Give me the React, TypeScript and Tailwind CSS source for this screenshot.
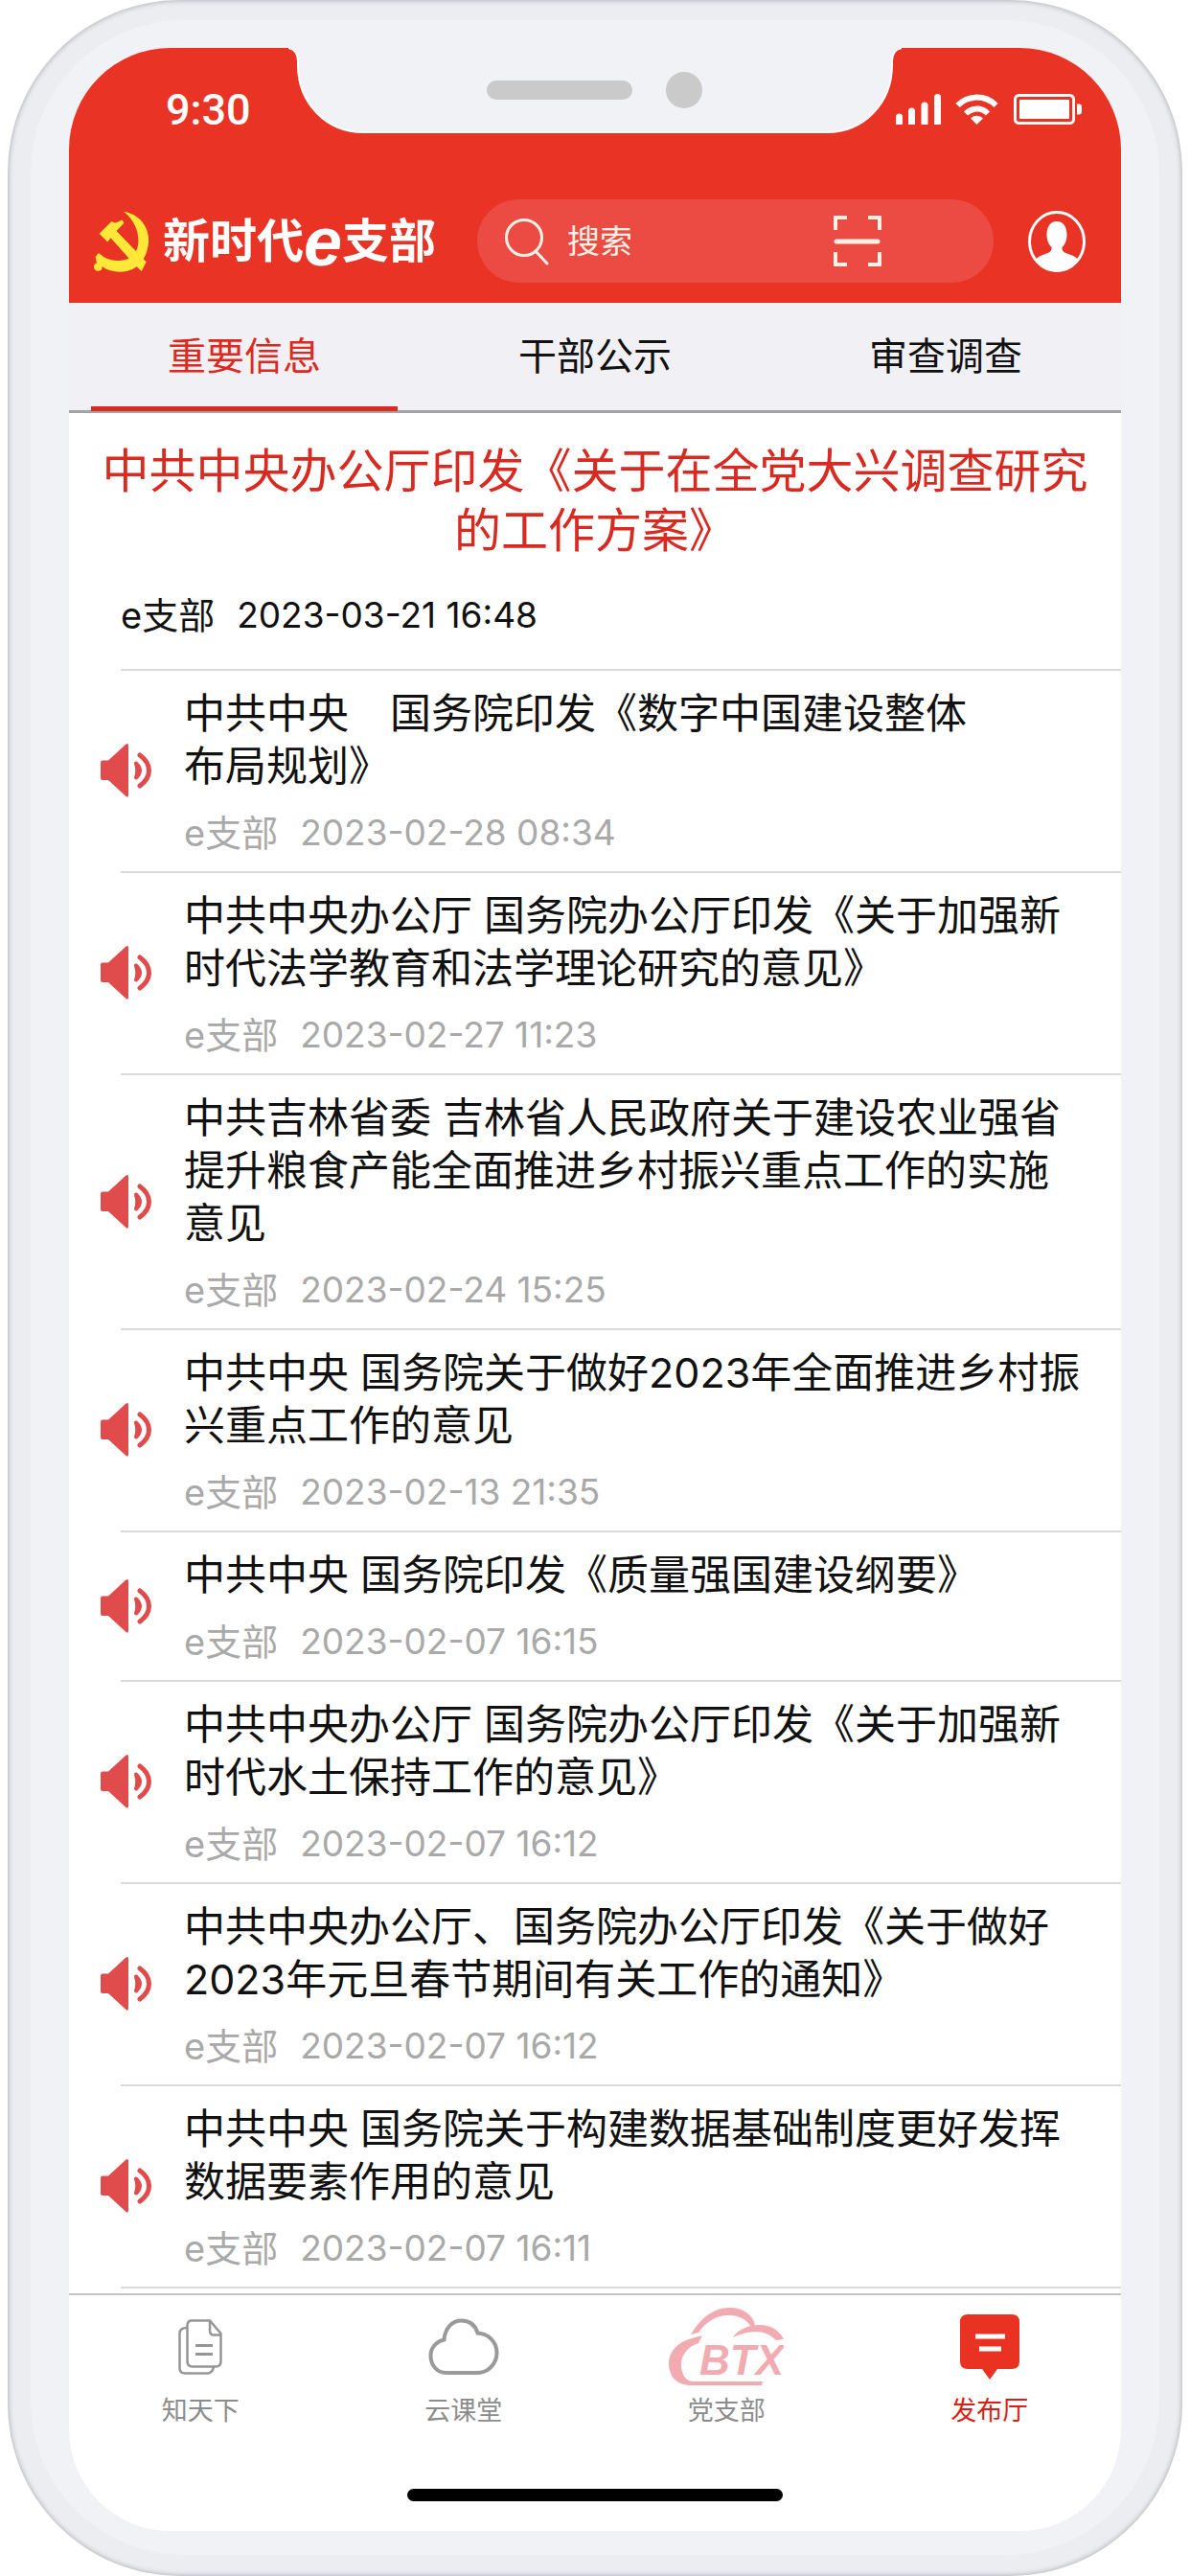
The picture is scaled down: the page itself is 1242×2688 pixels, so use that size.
import type { ReactNode } from 'react';

interface NewsItem {
  title: string;
  date: string;
}

const news: NewsItem[] = [
  { title: '中共中央　国务院印发《数字中国建设整体\n布局规划》', date: '2023-02-28 08:34' },
  { title: '中共中央办公厅 国务院办公厅印发《关于加强新\n时代法学教育和法学理论研究的意见》', date: '2023-02-27 11:23' },
  { title: '中共吉林省委 吉林省人民政府关于建设农业强省\n提升粮食产能全面推进乡村振兴重点工作的实施\n意见', date: '2023-02-24 15:25' },
  { title: '中共中央 国务院关于做好2023年全面推进乡村振\n兴重点工作的意见', date: '2023-02-13 21:35' },
  { title: '中共中央 国务院印发《质量强国建设纲要》', date: '2023-02-07 16:15' },
  { title: '中共中央办公厅 国务院办公厅印发《关于加强新\n时代水土保持工作的意见》', date: '2023-02-07 16:12' },
  { title: '中共中央办公厅、国务院办公厅印发《关于做好\n2023年元旦春节期间有关工作的通知》', date: '2023-02-07 16:12' },
  { title: '中共中央 国务院关于构建数据基础制度更好发挥\n数据要素作用的意见', date: '2023-02-07 16:11' },
];

const tabs = ['重要信息', '干部公示', '审查调查'];

function Notch() {
  return (
    <div className="absolute inset-x-0 top-0 flex justify-center">
      <svg width="640" height="90" viewBox="0 0 640 90">
        <path
          d="M0 0Q10 2 10 14V18C10 58 40 88 78 88H562C600 88 630 58 630 18V14Q630 2 640 0"
          fill="#f0f2f5"
          stroke="#fff"
          strokeWidth="2"
        />
        <rect x="207" y="34" width="152" height="20" rx="10" fill="#cacaca" />
        <circle cx="413" cy="44" r="19" fill="#cacaca" />
      </svg>
    </div>
  );
}

function StatusIcons() {
  return (
    <svg width="194" height="32" viewBox="0 0 194 32" fill="#fff">
      <path d="M0 32v-8a3.5 3.5 0 0 1 7 0v8z" />
      <path d="M13 32V18a3.5 3.5 0 0 1 7 0v14z" />
      <path d="M26.5 32V12a3.5 3.5 0 0 1 7 0v20z" />
      <path d="M40 32V3.5a3.5 3.5 0 0 1 7 0V32z" />
      <g fill="none" stroke="#fff" strokeWidth="6">
        <path d="M64.5 12A28 28 0 0 1 104.5 12" />
        <path d="M73 20.5A16 16 0 0 1 96 20.5" />
      </g>
      <path d="M84.5 32l-6.5-6.500a9 9 0 0 1 13 0z" />
      <rect x="124.5" y="1.5" width="61" height="29" rx="4" fill="none" stroke="#fff" strokeWidth="3" />
      <rect x="129" y="6" width="52" height="20" rx="1" />
      <path d="M189 10.5h2a3 3 0 0 1 3 3v5a3 3 0 0 1-3 3h-2z" />
    </svg>
  );
}

function PartyEmblem() {
  return (
    <svg width="58" height="64" viewBox="50 88 175 195" fill="#ffe838" preserveAspectRatio="none">
      <path d="M147 90C205 100 232 150 224 197C216 253 180 282 136 282C112 282 93 276 79 265A13 13 0 1 1 62 254L58 234L68 222L86 236C112 250 150 250 172 234C206 206 200 132 147 90Z" />
      <path d="M70 160L108 122L122 126L142 117L148 127L124 152L218 250L203 280L180 258L106 174L96 187Z" />
    </svg>
  );
}

function SearchIcon() {
  return (
    <svg width="46" height="50" viewBox="0 0 46 50" fill="none" stroke="#fff0e6" strokeWidth="3">
      <circle cx="20" cy="21" r="18.5" />
      <path d="M32 35L44 48" strokeLinecap="round" />
    </svg>
  );
}

function ScanIcon() {
  return (
    <svg width="50" height="54" viewBox="0 0 50 54" fill="none" stroke="#fff0e6" strokeWidth="4">
      <path d="M2 15V2H14M36 2H48V15M2 38V51H14M36 51H48V38" />
      <path d="M3 27H46" strokeWidth="5" strokeLinecap="round" />
    </svg>
  );
}

function AvatarIcon() {
  return (
    <svg width="60" height="64" viewBox="0 0 60 64">
      <ellipse cx="30" cy="32" rx="28.5" ry="30.5" fill="none" stroke="#fff" strokeWidth="3" />
      <path
        d="M30 11C23 11 19.5 17 19.5 25C19.5 31 21.5 35 24.5 38C25 42 22 44 18 45C13 46.5 10 48 8 51C13 59 21 63.5 30 63.5C39 63.5 47 59 52 51C50 48 47 46.5 42 45C38 44 35 42 35.5 38C38.5 35 40.5 31 40.5 25C40.5 17 37 11 30 11Z"
        fill="#fff"
      />
    </svg>
  );
}

function SpeakerIcon() {
  return (
    <svg width="54" height="58" viewBox="0 0 54 58" fill="none" stroke="#e04c4c" strokeLinecap="round">
      <path d="M2 18.5H8L26.5 1.5Q29 0 29 3V54Q29 58 26.5 56L8 39H2Q0 39 0 37V20.5Q0 18.5 2 18.5Z" fill="#e04c4c" stroke="none" />
      <path d="M37 21.5Q45 29 37 36.5Q39.500 29 37 21.5Z" fill="#e04c4c" strokeWidth="4" strokeLinejoin="round" />
      <path d="M41 13Q50.500 20 50.500 29Q50.500 38 41 45" strokeWidth="5" />
    </svg>
  );
}

function DocsIcon() {
  return (
    <svg width="46" height="58" viewBox="0 0 46 58" fill="none" stroke="#969696" strokeWidth="2.5">
      <path d="M13 1.5H33L44.5 15V44Q44.5 49.5 39 49.5H15Q9.5 49.5 9.5 44V6Q10 2 13 1.5Z" />
      <path d="M33 2V12Q33 16.5 37 16.5H44" />
      <path d="M9 9Q1.5 9 1.5 15V51Q1.5 56.5 7 56.5H31Q36 56 37 49.5" />
      <path d="M18 27.5H36M18 36.5H36" strokeWidth="3" />
    </svg>
  );
}

function CloudIcon() {
  return (
    <svg width="74" height="60" viewBox="0 0 74 60" fill="none" stroke="#9a9a9a" strokeWidth="4">
      <path d="M16.5 22.5C17.5 10 25 2.5 34.5 2.5C43 2.5 49 7 51.5 15.5C63 16 71.5 25 71.5 36C71.5 48 62 57 51 57H19C9 57 2.5 49 2.5 39C2.5 31 8 24.5 16.5 22.5Z" />
    </svg>
  );
}

function BtxIcon() {
  return (
    <svg width="120" height="82" viewBox="0 0 120 82" fill="#f2abb0">
      <path d="M23 28C35 8 49 0 64 0C78 0 88 8 90 18L86 20C81 12 73 8 62 8C49 8 39 15 31 26Z" />
      <path d="M67 31C73 22 84 18 94 18C106 18 115 23 120 33L112 34C106 28 99 25 91 25C83 25 75 27 67 31Z" />
      <path d="M24 32L35 29L31 37C19 41 13 50 13 59C13 70 18 77 26 77H98L97 81H21C7 80 0 71 0 58C0 46 9 36 24 32Z" />
      <text x="32" y="70" className="font-['Liberation_Sans',Arial,sans-serif] text-[44px] font-bold italic">
        BTX
      </text>
    </svg>
  );
}

function NoticeIcon() {
  return (
    <svg width="62" height="68" viewBox="0 0 62 68">
      <path d="M8 0H54Q62 0 62 8V49Q62 57 54 57H39L31 68L23 57H8Q0 57 0 49V8Q0 0 8 0Z" fill="#ea3223" />
      <path d="M16 23H47M20 36H43" stroke="#fff" strokeWidth="5" />
    </svg>
  );
}

function Meta({ date }: { date: string }) {
  return (
    <p className="flex gap-[23px] text-[38px] leading-[44px]">
      <span>e支部</span>
      <time className="text-[37px]">{date}</time>
    </p>
  );
}

function NewsRow({ item }: { item: NewsItem }) {
  return (
    <li>
      <div className="ml-[54px] h-[2px] bg-[#dadada]" />
      <div className="flex items-center pt-[17px] pb-[18px] pl-[33px]">
        <button type="button" aria-label="朗读" className="mr-[33px] shrink-0">
          <SpeakerIcon />
        </button>
        <a href="#" className="flex flex-col gap-5">
          <h2 className="text-[43px] leading-[55px] whitespace-pre-line text-[#111]">{item.title}</h2>
          <div className="text-[#a9a9a9]">
            <Meta date={item.date} />
          </div>
        </a>
      </div>
    </li>
  );
}

function NavItem({ label, active, children }: { label: string; active?: boolean; children: ReactNode }) {
  return (
    <a
      href="#"
      aria-current={active ? 'page' : undefined}
      className={`flex flex-1 flex-col items-center gap-[10px] ${active ? 'text-[#dc1f16]' : 'text-[#8c8c8c]'}`}
    >
      <span className="flex h-[82px] items-center">{children}</span>
      <span className="text-[27px] leading-8">{label}</span>
    </a>
  );
}

export default function App() {
  return (
    <div className="flex min-h-screen flex-col bg-white px-2 font-[Inter,'Noto_Sans_CJK_SC',sans-serif]">
      {/* phone body: outer rim, then the flat bezel */}
      <div className="flex flex-1 flex-col rounded-[180px] bg-[#ecedf1] px-6 pt-[21px] pb-[22px] shadow-[inset_0_0_5px_1px_#b4b6ba]">
        <div className="flex flex-1 flex-col rounded-[160px] bg-[#f0f2f5] px-10 pt-[29px] pb-[25px]">
          <div className="relative flex flex-1 flex-col overflow-hidden rounded-[106px] bg-white">
            <header className="bg-[#e93425] pb-[21px] text-white">
              <div className="flex h-[158px] items-start justify-between pt-[42px] pr-[41px] pl-[101px]">
                <span className="font-[Roboto,sans-serif] text-[45px] leading-[46px] font-medium">9:30</span>
                <span className="pt-[6px]">
                  <StatusIcons />
                </span>
              </div>
              <div className="flex items-center pr-[37px] pl-[25px]">
                <PartyEmblem />
                <h1 className="mr-[43px] ml-[15px] flex items-center text-[49px] leading-[60px] font-bold whitespace-nowrap">
                  新时代
                  <span className="font-['Liberation_Sans',Arial,sans-serif] text-[72px] italic">e</span>
                  支部
                </h1>
                <div className="flex h-[87px] flex-1 items-center rounded-full bg-[#ec4b44] pr-[117px] pl-[29px]">
                  <label htmlFor="search" aria-label="搜索">
                    <SearchIcon />
                  </label>
                  <input
                    id="search"
                    type="search"
                    placeholder="搜索"
                    className="ml-[19px] w-0 flex-1 bg-transparent text-[34px] outline-none placeholder:text-[#fff0e6]"
                  />
                  <button type="button" aria-label="扫一扫">
                    <ScanIcon />
                  </button>
                </div>
                <button type="button" aria-label="我的" className="ml-9">
                  <AvatarIcon />
                </button>
              </div>
            </header>
            <Notch />

            <div role="tablist" className="flex h-[115px] border-b-3 border-[#a3a3a8] bg-[#f1f0f5]">
              {tabs.map((tab, i) => (
                <button
                  key={tab}
                  type="button"
                  role="tab"
                  aria-selected={i === 0}
                  className={`relative flex-1 text-[40px] leading-[48px] ${i === 0 ? 'text-[#dc2a20]' : 'text-[#111]'}`}
                >
                  {tab}
                  {i === 0 && <span className="absolute inset-x-[23px] bottom-[-1px] h-[5px] bg-[#dc2a20]" />}
                </button>
              ))}
            </div>

            <main className="flex-1">
              <a href="#" className="block pt-[30px] pb-[34px]">
                <h2 className="text-center text-[49px] leading-[62px] whitespace-pre-line text-[#d82a20]">
                  {'中共中央办公厅印发《关于在全党大兴调查研究\n的工作方案》'}
                </h2>
                <div className="mt-[35px] pl-[54px] text-[#111]">
                  <Meta date="2023-03-21 16:48" />
                </div>
              </a>
              <ul>
                {news.map((item) => (
                  <NewsRow key={item.title} item={item} />
                ))}
              </ul>
              <div className="ml-[54px] h-[2px] bg-[#dadada]" />
            </main>

            <nav className="border-t-2 border-[#c4c4c4] pt-[13px] pb-[31px]">
              <div className="flex">
                <NavItem label="知天下">
                  <DocsIcon />
                </NavItem>
                <NavItem label="云课堂">
                  <CloudIcon />
                </NavItem>
                <NavItem label="党支部">
                  <BtxIcon />
                </NavItem>
                <NavItem label="发布厅" active>
                  <NoticeIcon />
                </NavItem>
              </div>
              <div className="mx-auto mt-[65px] h-[13px] w-[392px] rounded-full bg-black" />
            </nav>
          </div>
        </div>
      </div>
    </div>
  );
}
